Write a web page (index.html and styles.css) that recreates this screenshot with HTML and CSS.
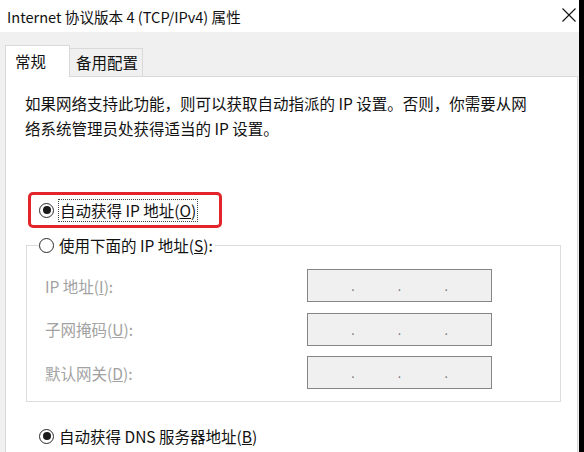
FILE: index.html
```html
<!DOCTYPE html>
<html lang="zh-CN">
<head>
    <meta charset="UTF-8">
    <meta name="viewport" content="width=device-width, initial-scale=1.0">
    <title>Internet 协议版本 4 (TCP/IPv4) 属性</title>
    <link rel="stylesheet" href="styles.css">
</head>
<body>
    <div class="window">
        <div class="titlebar">
            <span class="title">Internet 协议版本 4 (TCP/IPv4) 属性</span>
            <svg class="close" width="14" height="14" viewBox="0 0 14 14">
                <path d="M0.5 0.5 L13.5 13.5 M13.5 0.5 L0.5 13.5" stroke="#111" stroke-width="1.1" fill="none"/>
            </svg>
        </div>

        <div class="dialog">
            <div class="tabs">
                <div class="tab active">常规</div>
                <div class="tab">备用配置</div>
            </div>

            <div class="panel">
                <p class="intro">如果网络支持此功能，则可以获取自动指派的 IP 设置。否则，你需要从网<br>络系统管理员处获得适当的 IP 设置。</p>

                <div class="highlight">
                    <span class="radio checked"></span>
                    <span class="focus">自动获得 IP 地址(<u>O</u>)</span>
                </div>

                <fieldset class="group">
                    <legend class="option">
                        <span class="radio"></span>
                        <span>使用下面的 IP 地址(<u>S</u>):</span>
                    </legend>
                    <div class="fields">
                        <label>IP 地址(<u>I</u>):</label>
                        <div class="ip"><span></span>.<span></span>.<span></span>.<span></span></div>
                        <label>子网掩码(<u>U</u>):</label>
                        <div class="ip"><span></span>.<span></span>.<span></span>.<span></span></div>
                        <label>默认网关(<u>D</u>):</label>
                        <div class="ip"><span></span>.<span></span>.<span></span>.<span></span></div>
                    </div>
                </fieldset>

                <div class="option dns">
                    <span class="radio checked"></span>
                    <span>自动获得 DNS 服务器地址(<u>B</u>)</span>
                </div>
            </div>
        </div>
    </div>
</body>
</html>
```

FILE: styles.css
```css
body {
    margin: 0;
    background: #000;
    font-family: "Noto Sans CJK SC", "Microsoft YaHei", sans-serif;
    font-size: 15.5px;
    color: #111;
    overflow: hidden;
}

.window {
    width: 579px;
    height: 452px;
    background: #fff;
    display: flex;
    flex-direction: column;
}

.titlebar {
    height: 32px;
    display: flex;
    align-items: center;
    justify-content: space-between;
    padding: 0 3px 0 7px;
    flex-shrink: 0;
}

.title {
    font-size: 14.6px;
    color: #111;
}

.close {
    margin-top: -3px;
}

.dialog {
    flex: 1;
    background: #f0f0f0;
    padding: 13px 1px 0 5px;
    display: flex;
    flex-direction: column;
}

.tabs {
    display: flex;
    align-items: flex-end;
    height: 31px;
}

.tab {
    box-sizing: border-box;
    height: 28px;
    width: 73px;
    padding-left: 6px;
    border: 1px solid #d9d9d9;
    border-left: none;
    border-bottom: none;
    line-height: 27px;
    background: #f0f0f0;
}

.tab.active {
    position: relative;
    z-index: 1;
    height: 32px;
    width: 65px;
    margin-bottom: -1px;
    padding-left: 9px;
    border-left: 1px solid #d9d9d9;
    background: #fff;
    line-height: 30px;
}

.panel {
    flex: 1;
    background: #fff;
    border: 1px solid #d9d9d9;
    border-bottom: none;
    padding: 14px 0 0 19px;
}

.intro {
    margin: 0;
    line-height: 25px;
}

.radio {
    box-sizing: border-box;
    width: 15px;
    height: 15px;
    border: 1px solid #2a2a2a;
    border-radius: 50%;
    background: #fff;
    display: flex;
    align-items: center;
    justify-content: center;
    flex-shrink: 0;
}

.radio.checked::after {
    content: "";
    width: 8px;
    height: 8px;
    border-radius: 50%;
    background: #1a1a1a;
}

.highlight {
    box-sizing: border-box;
    width: 194px;
    height: 36px;
    margin: 51px 0 0 3px;
    padding-left: 8px;
    border: 3px solid #e3252b;
    border-radius: 5px;
    display: flex;
    align-items: center;
    gap: 4px;
}

.focus {
    box-sizing: border-box;
    height: 23px;
    padding: 0 1px;
    border: 1px dotted #444;
    line-height: 21px;
}

.option {
    display: flex;
    align-items: center;
    gap: 5px;
    height: 22px;
}

.group {
    box-sizing: border-box;
    width: 535px;
    margin: 6px 0 0 1px;
    padding: 0;
    border: 1px solid #dcdcdc;
}

.group legend {
    margin-left: 12px;
    padding: 0 2px 0 0;
}

.fields {
    display: grid;
    grid-template-columns: 262px 185px;
    row-gap: 10.5px;
    align-items: center;
    padding: 13px 0 12px 18px;
}

.fields label {
    color: #a2a2a2;
}

.ip {
    box-sizing: border-box;
    height: 33px;
    border: 1px solid #858585;
    background: #f0f0f0;
    display: flex;
    align-items: center;
    color: #777;
    font-size: 12px;
}

.ip span {
    flex: 1;
}

.dns {
    margin: 23px 0 0 14px;
}
```
